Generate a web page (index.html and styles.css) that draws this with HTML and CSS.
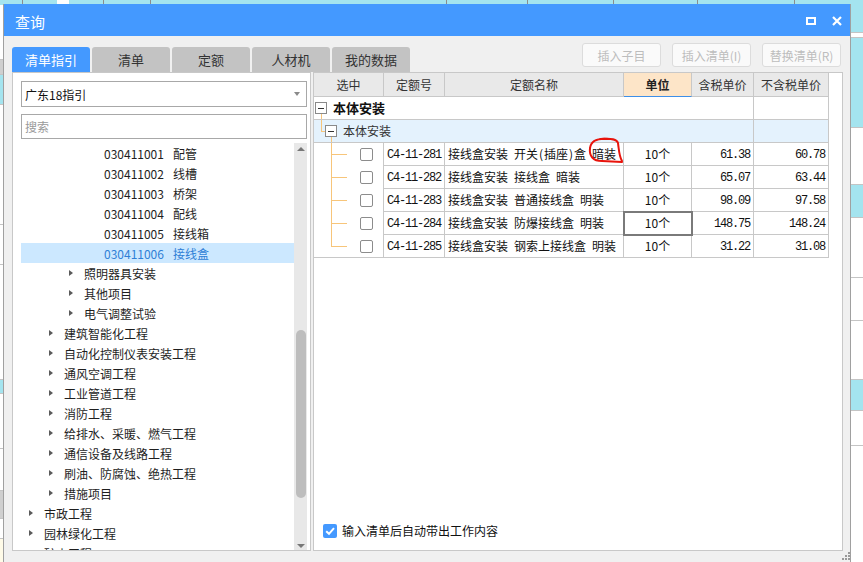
FILE: index.html
```html
<!DOCTYPE html>
<html lang="zh">
<head>
<meta charset="utf-8">
<title>查询</title>
<link rel="stylesheet" href="styles.css">
</head>
<body>
<div class="app-bg">
  <div class="app-top"></div>
  <div class="app-left">
    <div class="blk w" style="height:55px"></div>
    <div class="blk g" style="height:15px"></div>
    <div class="blk c" style="height:30px"></div>
    <div class="blk w" style="height:120px"></div>
    <div class="blk w" style="height:40px"></div>
    <div class="blk w" style="height:115px"></div>
    <div class="blk c" style="height:14px"></div>
    <div class="blk w" style="height:55px"></div>
    <div class="blk w" style="height:42px"></div>
    <div class="blk g" style="height:28px"></div>
    <div class="blk w" style="height:20px"></div>
    <div class="blk y" style="height:30px"></div>
  </div>
  <div class="app-right">
    <div class="blk c" style="height:28px"></div>
    <div class="blk w" style="height:5px"></div>
    <div class="blk c" style="height:90px"></div>
    <div class="blk w" style="height:57px"></div>
    <div class="blk c" style="height:33px"></div>
    <div class="blk w" style="height:60px"></div>
    <div class="blk w" style="height:43px"></div>
    <div class="blk w" style="height:59px"></div>
    <div class="blk c" style="height:31px"></div>
    <div class="blk w" style="height:35px"></div>
    <div class="blk w" style="height:121px"></div>
  </div>
</div>

<div class="dialog">
  <div class="titlebar">
    <span class="title">查询</span>
    <div class="win-btns">
      <span class="btn-max"></span>
      <svg class="btn-close" width="10" height="10" viewBox="0 0 10 10"><path d="M1 1L9 9M9 1L1 9" stroke="#fff" stroke-width="2.2" fill="none"/></svg>
    </div>
  </div>

  <div class="dlg-body">
    <div class="toolbar">
      <div class="tabs">
        <div class="tab active">清单指引</div>
        <div class="tab">清单</div>
        <div class="tab">定额</div>
        <div class="tab">人材机</div>
        <div class="tab">我的数据</div>
      </div>
      <div class="actions">
        <div class="action">插入子目</div>
        <div class="action">插入清单(I)</div>
        <div class="action">替换清单(R)</div>
      </div>
    </div>

    <div class="panels">
      <div class="left-panel">
        <div class="select"><span>广东18指引</span><span class="caret"></span></div>
        <div class="search">搜索</div>
        <div class="tree">
          <div class="tree-list">
            <div class="node l3"><span class="code">030411001</span>配管</div>
            <div class="node l3"><span class="code">030411002</span>线槽</div>
            <div class="node l3"><span class="code">030411003</span>桥架</div>
            <div class="node l3"><span class="code">030411004</span>配线</div>
            <div class="node l3"><span class="code">030411005</span>接线箱</div>
            <div class="node l3 sel"><span class="code">030411006</span>接线盒</div>
            <div class="node l2"><span class="arrow"></span>照明器具安装</div>
            <div class="node l2"><span class="arrow"></span>其他项目</div>
            <div class="node l2"><span class="arrow"></span>电气调整试验</div>
            <div class="node l1"><span class="arrow"></span>建筑智能化工程</div>
            <div class="node l1"><span class="arrow"></span>自动化控制仪表安装工程</div>
            <div class="node l1"><span class="arrow"></span>通风空调工程</div>
            <div class="node l1"><span class="arrow"></span>工业管道工程</div>
            <div class="node l1"><span class="arrow"></span>消防工程</div>
            <div class="node l1"><span class="arrow"></span>给排水、采暖、燃气工程</div>
            <div class="node l1"><span class="arrow"></span>通信设备及线路工程</div>
            <div class="node l1"><span class="arrow"></span>刷油、防腐蚀、绝热工程</div>
            <div class="node l1"><span class="arrow"></span>措施项目</div>
            <div class="node l0"><span class="arrow"></span>市政工程</div>
            <div class="node l0"><span class="arrow"></span>园林绿化工程</div>
            <div class="node l0"><span class="arrow"></span>矿山工程</div>
          </div>
          <div class="scrollbar">
            <span class="sb-up"></span>
            <span class="sb-thumb"></span>
            <span class="sb-down"></span>
          </div>
        </div>
      </div>

      <div class="right-panel">
        <div class="grid">
          <div class="row head">
            <div class="cell">选中</div>
            <div class="cell">定额号</div>
            <div class="cell">定额名称</div>
            <div class="cell unit">单位</div>
            <div class="cell">含税单价</div>
            <div class="cell">不含税单价</div>
          </div>
          <div class="row">
            <div class="cell span5 g1">
              <span class="minus"></span><span class="g1-text">本体安装</span>
              <span class="tl tl-v1"></span>
            </div>
            <div class="cell"></div>
          </div>
          <div class="row blue">
            <div class="cell span5 g2">
              <span class="tl tl-v2a"></span><span class="tl tl-h2a"></span>
              <span class="minus"></span><span class="g2-text">本体安装</span>
              <span class="tl tl-v2b"></span>
            </div>
            <div class="cell"></div>
          </div>
          <div class="row">
            <div class="cell chk-cell"><span class="tl tl-v"></span><span class="tl tl-h"></span><span class="cbox"></span></div>
            <div class="cell mono">C4-11-281</div>
            <div class="cell">接线盒安装&ensp;开关<span class="hw">(</span>插座<span class="hw">)</span>盒&ensp;暗装</div>
            <div class="cell ctr">10个</div>
            <div class="cell mono num">61.38</div>
            <div class="cell mono num">60.78</div>
          </div>
          <div class="row">
            <div class="cell chk-cell"><span class="tl tl-v"></span><span class="tl tl-h"></span><span class="cbox"></span></div>
            <div class="cell mono">C4-11-282</div>
            <div class="cell">接线盒安装&ensp;接线盒&ensp;暗装</div>
            <div class="cell ctr">10个</div>
            <div class="cell mono num">65.07</div>
            <div class="cell mono num">63.44</div>
          </div>
          <div class="row">
            <div class="cell chk-cell"><span class="tl tl-v"></span><span class="tl tl-h"></span><span class="cbox"></span></div>
            <div class="cell mono">C4-11-283</div>
            <div class="cell">接线盒安装&ensp;普通接线盒&ensp;明装</div>
            <div class="cell ctr">10个</div>
            <div class="cell mono num">98.09</div>
            <div class="cell mono num">97.58</div>
          </div>
          <div class="row">
            <div class="cell chk-cell"><span class="tl tl-v"></span><span class="tl tl-h"></span><span class="cbox"></span></div>
            <div class="cell mono">C4-11-284</div>
            <div class="cell">接线盒安装&ensp;防爆接线盒&ensp;明装</div>
            <div class="cell ctr focus">10个</div>
            <div class="cell mono num">148.75</div>
            <div class="cell mono num">148.24</div>
          </div>
          <div class="row">
            <div class="cell chk-cell last"><span class="tl tl-v half"></span><span class="tl tl-h"></span><span class="cbox"></span></div>
            <div class="cell mono">C4-11-285</div>
            <div class="cell">接线盒安装&ensp;钢索上接线盒&ensp;明装</div>
            <div class="cell ctr">10个</div>
            <div class="cell mono num">31.22</div>
            <div class="cell mono num">31.08</div>
          </div>
        </div>

        <div class="auto-row">
          <span class="auto-check"><svg width="14" height="14" viewBox="0 0 14 14"><path d="M3.2 7.2L6 9.8L11 4.2" stroke="#fff" stroke-width="2" fill="none"/></svg></span>
          <span>输入清单后自动带出工作内容</span>
        </div>

        <svg class="mark" width="44" height="32" viewBox="0 0 44 32"><path d="M23 3C11 2 6 5 5 12C4 20 8 25 17 25L37 26M15 3C27 2 32 3 33 7C34 14 34 20 37 25" stroke="#e8140c" stroke-width="2" fill="none" stroke-linecap="round"/></svg>
      </div>
    </div>
  </div>

  <svg class="grip" width="8" height="8" viewBox="0 0 8 8"><g fill="#9a9a9a"><rect x="6" y="0" width="2" height="2"/><rect x="3" y="3" width="2" height="2"/><rect x="6" y="3" width="2" height="2"/><rect x="0" y="6" width="2" height="2"/><rect x="3" y="6" width="2" height="2"/><rect x="6" y="6" width="2" height="2"/></g></svg>
</div>
</body>
</html>
```

FILE: styles.css
```css
* { box-sizing: border-box; }
html, body { margin: 0; padding: 0; }
body {
  width: 863px;
  height: 562px;
  overflow: hidden;
  position: relative;
  background: #fff;
  font-family: "Noto Sans CJK SC", "Noto Sans", sans-serif;
  font-size: 12px;
  color: #222;
}

/* underlying application */
.app-bg {
  position: absolute;
  inset: 0;
  display: grid;
  grid-template-columns: 3px 1fr 12px;
  grid-template-rows: 5px 1fr;
}
.app-top {
  grid-column: 1 / 4;
  background:
    linear-gradient(#8c8c8c, #8c8c8c) 22px 0 / 1px 100% no-repeat,
    linear-gradient(#fff, #fff) 57px 0 / 12px 100% no-repeat,
    linear-gradient(#8c8c8c, #8c8c8c) 103px 0 / 1px 100% no-repeat,
    linear-gradient(#8c8c8c, #8c8c8c) 150px 0 / 1px 100% no-repeat,
    linear-gradient(#8c8c8c, #8c8c8c) 446px 0 / 1px 100% no-repeat,
    linear-gradient(#8c8c8c, #8c8c8c) 527px 0 / 1px 100% no-repeat,
    linear-gradient(#8c8c8c, #8c8c8c) 613px 0 / 1px 100% no-repeat,
    linear-gradient(#8c8c8c, #8c8c8c) 697px 0 / 1px 100% no-repeat,
    linear-gradient(#8c8c8c, #8c8c8c) 794px 0 / 1px 100% no-repeat,
    #a4e4ef;
}
.app-left, .app-right {
  grid-row: 2;
  display: flex;
  flex-direction: column;
  overflow: hidden;
}
.app-left { grid-column: 1; }
.app-right { grid-column: 3; }
.blk { flex: none; border-bottom: 1px solid #c4c4c4; }
.blk.c { background: #a4e4ef; }
.blk.w { background: #fff; }
.blk.g { background: #cfcfcf; }
.blk.y { background: #fffbe8; }

/* dialog window */
.dialog {
  position: absolute;
  left: 3px;
  top: 4px;
  width: 848px;
  height: 562px;
  border: 1px solid #a0a0a0;
  border-top: 0;
  background: #f0f0f0;
  display: flex;
  flex-direction: column;
}
.titlebar {
  height: 32px;
  flex: none;
  background: #4499ff;
  display: flex;
  align-items: center;
  padding: 0 8px 0 11px;
  color: #fff;
}
.title { flex: 1; font-size: 15px; padding-top: 2px; }
.win-btns { display: flex; align-items: center; gap: 16px; padding-top: 2px; }
.btn-max { width: 10px; height: 8px; border: 2px solid #fff; }
.btn-close { display: block; }

.dlg-body {
  flex: 1;
  display: flex;
  flex-direction: column;
  padding: 0 7px 0 8px;
}
.toolbar {
  height: 36px;
  flex: none;
  display: flex;
  justify-content: space-between;
}
.tabs { display: flex; gap: 2px; align-self: flex-end; }
.tab {
  width: 78px;
  height: 25px;
  background: #c3c3c3;
  border-radius: 3px 3px 0 0;
  display: flex;
  align-items: center;
  justify-content: center;
  font-size: 13px;
  color: #333;
}
.tab.active { background: #4499ff; color: #fff; }
.actions {
  display: flex;
  gap: 11px;
  margin-top: 7px;
  margin-right: 2px;
  align-self: flex-start;
}
.action {
  width: 79px;
  height: 24px;
  border: 1px solid #dcdcdc;
  border-radius: 3px;
  background: #fafafa;
  color: #bdbdbd;
  display: flex;
  align-items: center;
  justify-content: center;
}

.panels { display: flex; gap: 2px; height: 479px; flex: none; }

/* left panel */
.left-panel {
  width: 299px;
  flex: none;
  border: 1px solid #c8c8c8;
  background: #fff;
  display: flex;
  flex-direction: column;
  padding: 8px 3px 0 8px;
}
.select {
  height: 26px;
  flex: none;
  border: 1px solid #a8a8a8;
  display: flex;
  align-items: center;
  justify-content: space-between;
  padding: 0 6px 0 3px;
  color: #111;
}
.caret {
  width: 0; height: 0;
  border-top: 4px solid #8a8a8a;
  border-left: 3.5px solid transparent;
  border-right: 3.5px solid transparent;
}
.search {
  margin-top: 7px;
  height: 25px;
  flex: none;
  border: 1px solid #a8a8a8;
  padding-left: 3px;
  color: #9a9a9a;
  display: flex;
  align-items: center;
}
.tree {
  margin-top: 4px;
  flex: 1;
  min-height: 0;
  display: flex;
  overflow: hidden;
}
.tree-list { flex: 1; overflow: hidden; }
.node {
  height: 20px;
  display: flex;
  align-items: center;
  white-space: nowrap;
  color: #1e1e1e;
}
.node .arrow {
  width: 0; height: 0;
  border-left: 4px solid #5a5a5a;
  border-top: 3.5px solid transparent;
  border-bottom: 3.5px solid transparent;
  margin-right: 11px;
}
.l0 { padding-left: 8px; }
.l1 { padding-left: 28px; }
.l2 { padding-left: 48px; }
.l3 { padding-left: 83px; }
.code { margin-right: 9px; }
.node.sel { background: #cce8ff; color: #2f7fd6; }

.scrollbar {
  width: 13px;
  flex: none;
  background: #e8e8e8;
  display: flex;
  flex-direction: column;
  align-items: center;
}
.sb-up {
  margin-top: 4px;
  width: 0; height: 0;
  border-bottom: 4px solid #777;
  border-left: 4px solid transparent;
  border-right: 4px solid transparent;
}
.sb-thumb {
  margin-top: 179px;
  width: 10px;
  height: 168px;
  border-radius: 5px;
  background: #bdbdbd;
}
.sb-down {
  margin-top: 46px;
  width: 0; height: 0;
  border-top: 4px solid #777;
  border-left: 4px solid transparent;
  border-right: 4px solid transparent;
}

/* right panel */
.right-panel {
  flex: 1;
  border: 1px solid #c8c8c8;
  background: #fff;
  display: flex;
  flex-direction: column;
  position: relative;
}
.grid { width: 515px; }
.row {
  display: grid;
  grid-template-columns: 70px 61px 179px 68px 62px 75px;
  height: 23px;
}
.cell {
  border-right: 1px solid #c8c8c8;
  border-bottom: 1px solid #c8c8c8;
  display: flex;
  align-items: center;
  padding: 0 3px 2px;
  overflow: hidden;
  white-space: nowrap;
  color: #111;
  position: relative;
}
.row.head { height: 24px; background: #e9e9e9; }
.head .cell { justify-content: center; color: #333; padding-bottom: 0; }
.head .cell.unit {
  background: #fde5c8;
  font-weight: bold;
  color: #222;
  border-bottom: 1px solid #3d8fe8;
}
.span5 { grid-column: 1 / 6; }
.row.blue { background: #e4f2fd; }

.minus {
  width: 12px;
  height: 12px;
  flex: none;
  border: 1px solid #8a8a8a;
  background: #fff;
  position: relative;
}
.minus::after {
  content: "";
  position: absolute;
  left: 2px;
  top: 4.5px;
  width: 6px;
  height: 1px;
  background: #333;
}
.g1 { padding: 0 0 0 1px; }
.g1-text { margin-left: 6px; margin-bottom: 2px; font-weight: bold; font-size: 13px; color: #111; }
.g2 { padding: 0 0 0 11px; }
.g2-text { margin-left: 6px; margin-bottom: 2px; color: #333; }

.tl { position: absolute; background: #f7c57a; }
.tl-v1 { left: 7px; top: 17px; bottom: -1px; width: 1px; }
.tl-v2a { left: 7px; top: 0; height: 12px; width: 1px; }
.tl-h2a { left: 7px; top: 11px; width: 4px; height: 1px; }
.tl-v2b { left: 17px; top: 17px; bottom: -1px; width: 1px; }
.tl-v { left: 17px; top: 0; bottom: 0; width: 1px; }
.tl-v.half { bottom: auto; height: 12px; }
.tl-h { left: 17px; top: 11px; width: 16px; height: 1px; }

.chk-cell { border-bottom: 0; padding: 0; }
.chk-cell.last { border-bottom: 1px solid #c8c8c8; }
.cbox {
  margin-left: 46px;
  width: 13px;
  height: 13px;
  border: 1px solid #8c8c8c;
  border-radius: 2px;
  background: #fff;
}
.mono {
  font-family: "Liberation Mono", monospace;
  font-size: 12px;
  letter-spacing: -1.2px;
  padding-bottom: 0;
  padding-top: 1px;
}
.num { justify-content: flex-end; padding-right: 3px; }
.ctr { justify-content: center; }
.hw { display: inline-block; width: 6px; text-align: center; }
.focus { outline: 2px solid #7a7a7a; outline-offset: -1px; z-index: 1; }

.auto-row {
  margin-top: auto;
  padding: 0 0 11px 9px;
  display: flex;
  align-items: center;
  color: #111;
}
.auto-check {
  width: 14px;
  height: 14px;
  border-radius: 2px;
  background: #4499ff;
  margin-right: 5px;
  display: flex;
}

.mark { position: absolute; left: 271px; top: 63px; }

.grip { position: absolute; left: 838px; top: 548px; }
```
